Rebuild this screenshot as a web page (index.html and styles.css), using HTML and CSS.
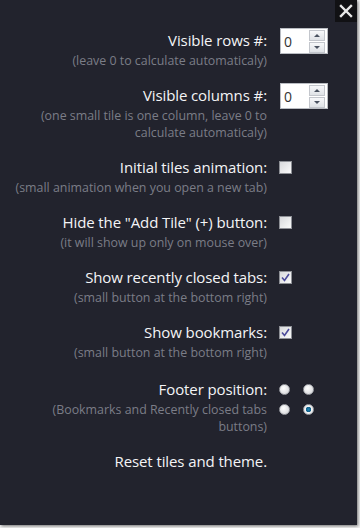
FILE: index.html
```html
<!DOCTYPE html>
<html>
<head>
<meta charset="utf-8">
<link rel="stylesheet" href="styles.css">
</head>
<body>
<div class="panel">
  <div class="close">
    <svg width="14" height="14" viewBox="0 0 14 14"><path d="M2 2 L12 12 M12 2 L2 12" stroke="#e8e8e8" stroke-width="2.4" stroke-linecap="square"/></svg>
  </div>
  <div class="settings">
    <div class="text">
      <div class="title">Visible rows #:</div>
      <div class="sub">(leave 0 to calculate automaticaly)</div>
    </div>
    <div class="ctrl">
      <div class="spin"><span class="val">0</span><span class="btns"><span class="sb"><i class="up"></i></span><span class="sb"><i class="down"></i></span></span></div>
    </div>

    <div class="text">
      <div class="title">Visible columns #:</div>
      <div class="sub">(one small tile is one column, leave 0 to calculate automaticaly)</div>
    </div>
    <div class="ctrl">
      <div class="spin"><span class="val">0</span><span class="btns"><span class="sb"><i class="up"></i></span><span class="sb"><i class="down"></i></span></span></div>
    </div>

    <div class="text">
      <div class="title">Initial tiles animation:</div>
      <div class="sub">(small animation when you open a new tab)</div>
    </div>
    <div class="ctrl"><span class="cb"></span></div>

    <div class="text">
      <div class="title">Hide the "Add Tile" (+) button:</div>
      <div class="sub">(it will show up only on mouse over)</div>
    </div>
    <div class="ctrl"><span class="cb"></span></div>

    <div class="text">
      <div class="title">Show recently closed tabs:</div>
      <div class="sub">(small button at the bottom right)</div>
    </div>
    <div class="ctrl"><span class="cb checked"><svg width="11" height="11" viewBox="0 0 11 11"><path d="M2 5.5 L4.5 8.5 L9 2" fill="none" stroke="#4b4a9a" stroke-width="1.6"/></svg></span></div>

    <div class="text">
      <div class="title">Show bookmarks:</div>
      <div class="sub">(small button at the bottom right)</div>
    </div>
    <div class="ctrl"><span class="cb checked"><svg width="11" height="11" viewBox="0 0 11 11"><path d="M2 5.5 L4.5 8.5 L9 2" fill="none" stroke="#4b4a9a" stroke-width="1.6"/></svg></span></div>

    <div class="text footer-row">
      <div class="title">Footer position:</div>
      <div class="sub sub-narrow">(Bookmarks and Recently closed tabs buttons)</div>
    </div>
    <div class="ctrl footer-row">
      <div class="radios">
        <span class="rd"></span><span class="rd"></span>
        <span class="rd"></span><span class="rd on"></span>
      </div>
    </div>

    <div class="text">
      <div class="title">Reset tiles and theme.</div>
    </div>
    <div class="ctrl"></div>
  </div>
</div>
</body>
</html>
```

FILE: styles.css
```css
html, body {
  margin: 0;
  padding: 0;
  background: #f2f2f2;
}
body {
  width: 360px;
  height: 528px;
  overflow: hidden;
  font-family: "Open Sans", "Noto Sans", sans-serif;
}
.panel {
  position: relative;
  width: 357px;
  height: 525px;
  background: #22232d;
  box-shadow: 1px 1px 3px rgba(0,0,0,0.55);
}
.close {
  position: absolute;
  top: 0;
  right: 0;
  width: 22px;
  height: 22px;
  background: #111114;
  display: flex;
  align-items: center;
  justify-content: center;
}
.settings {
  display: grid;
  grid-template-columns: 1fr 61px;
  column-gap: 12px;
  row-gap: 16px;
  padding: 30px 17px 0 0;
}
.text {
  text-align: right;
}
.title {
  color: #f4f4f6;
  font-size: 15px;
  line-height: 20px;
  letter-spacing: -0.1px;
}
.sub {
  color: #7b7d87;
  font-size: 12.4px;
  line-height: 17px;
  margin-top: 2px;
}
.sub-narrow {
  padding-left: 45px;
}
.footer-row {
  margin-top: 2px;
}
.ctrl {
  display: flex;
  align-items: flex-start;
}
.spin {
  margin-top: -2px;
  margin-left: 1px;
  width: 46px;
  height: 24px;
  background: #fff;
  border: 1px solid #b9bcc2;
  display: flex;
  align-items: center;
  justify-content: space-between;
}
.val {
  font-family: "Open Sans", sans-serif;
  font-size: 14px;
  color: #333;
  padding-left: 3px;
}
.btns {
  display: flex;
  flex-direction: column;
  gap: 1px;
  margin-right: 2px;
}
.sb {
  width: 14px;
  height: 9px;
  border: 1px solid #c3c6cc;
  background: linear-gradient(#f7f8fa, #dfe2e6);
  display: flex;
  align-items: center;
  justify-content: center;
}
.up {
  width: 0; height: 0;
  border-left: 3px solid transparent;
  border-right: 3px solid transparent;
  border-bottom: 3px solid #4a5260;
}
.down {
  width: 0; height: 0;
  border-left: 3px solid transparent;
  border-right: 3px solid transparent;
  border-top: 3px solid #4a5260;
}
.cb {
  margin-top: 4px;
  width: 11px;
  height: 11px;
  border: 1px solid #8e9096;
  background: linear-gradient(135deg, #d8d9dc, #fafafa);
  display: flex;
  align-items: center;
  justify-content: center;
}
.radios {
  margin-top: 5px;
  display: grid;
  grid-template-columns: 11px 11px;
  column-gap: 13px;
  row-gap: 9px;
}
.rd {
  width: 11px;
  height: 11px;
  border-radius: 50%;
  box-sizing: border-box;
  border: 1px solid #9ea0a6;
  background: radial-gradient(circle at 40% 35%, #ffffff, #cfd0d4);
}
.rd.on {
  background: radial-gradient(circle, #1e86b8 0, #135d85 2.5px, #f4f4f4 3px, #d6d7da 100%);
}
```
